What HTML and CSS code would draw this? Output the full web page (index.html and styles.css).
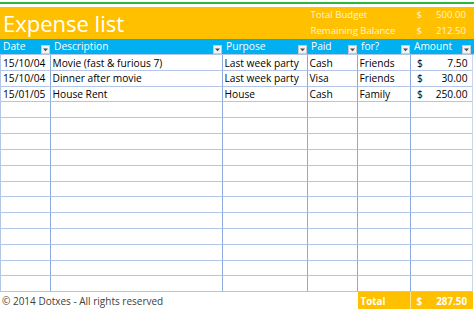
FILE: index.html
```html
<!DOCTYPE html>
<html>
<head>
<meta charset="utf-8">
<link rel="stylesheet" href="styles.css">
</head>
<body>
<div class="sheet">
  <div class="green"></div>
  <div class="banner">
    <h1 class="title">Expense list</h1>
    <div class="blabel">Total Budget</div>
    <div class="bmoney"><span>$</span><span>500.00</span></div>
    <div class="blabel">Remaining Balance</div>
    <div class="bmoney"><span>$</span><span>212.50</span></div>
  </div>

  <div class="head">
    <div class="h">Date<span class="dd"><svg viewBox="0 0 7 7" width="7" height="7"><polygon points="1,2.5 6,2.5 3.5,5.2" fill="#4a4a4a"/></svg></span></div>
    <div class="h">Description<span class="dd"><svg viewBox="0 0 7 7" width="7" height="7"><polygon points="1,2.5 6,2.5 3.5,5.2" fill="#4a4a4a"/></svg></span></div>
    <div class="h">Purpose<span class="dd"><svg viewBox="0 0 7 7" width="7" height="7"><polygon points="1,2.5 6,2.5 3.5,5.2" fill="#4a4a4a"/></svg></span></div>
    <div class="h">Paid<span class="dd"><svg viewBox="0 0 7 7" width="7" height="7"><polygon points="1,2.5 6,2.5 3.5,5.2" fill="#4a4a4a"/></svg></span></div>
    <div class="h">for?<span class="dd"><svg viewBox="0 0 7 7" width="7" height="7"><polygon points="1,2.5 6,2.5 3.5,5.2" fill="#4a4a4a"/></svg></span></div>
    <div class="h last">Amount<span class="dd"><svg viewBox="0 0 7 7" width="7" height="7"><polygon points="1,2.5 6,2.5 3.5,5.2" fill="#4a4a4a"/></svg></span></div>
  </div>

  <div class="body">
    <div class="c first">15/10/04</div><div class="c">Movie (fast &amp; furious 7)</div><div class="c">Last week party</div><div class="c">Cash</div><div class="c">Friends</div><div class="c amt"><span>$</span><span>7.50</span></div>
    <div class="c first">15/10/04</div><div class="c">Dinner after movie</div><div class="c">Last week party</div><div class="c">Visa</div><div class="c">Friends</div><div class="c amt"><span>$</span><span>30.00</span></div>
    <div class="c first">15/01/05</div><div class="c">House Rent</div><div class="c">House</div><div class="c">Cash</div><div class="c">Family</div><div class="c amt"><span>$</span><span>250.00</span></div>
    <div class="c first"></div><div class="c"></div><div class="c"></div><div class="c"></div><div class="c"></div><div class="c amt"></div>
    <div class="c first"></div><div class="c"></div><div class="c"></div><div class="c"></div><div class="c"></div><div class="c amt"></div>
    <div class="c first"></div><div class="c"></div><div class="c"></div><div class="c"></div><div class="c"></div><div class="c amt"></div>
    <div class="c first"></div><div class="c"></div><div class="c"></div><div class="c"></div><div class="c"></div><div class="c amt"></div>
    <div class="c first"></div><div class="c"></div><div class="c"></div><div class="c"></div><div class="c"></div><div class="c amt"></div>
    <div class="c first"></div><div class="c"></div><div class="c"></div><div class="c"></div><div class="c"></div><div class="c amt"></div>
    <div class="c first"></div><div class="c"></div><div class="c"></div><div class="c"></div><div class="c"></div><div class="c amt"></div>
    <div class="c first"></div><div class="c"></div><div class="c"></div><div class="c"></div><div class="c"></div><div class="c amt"></div>
    <div class="c first"></div><div class="c"></div><div class="c"></div><div class="c"></div><div class="c"></div><div class="c amt"></div>
    <div class="c first"></div><div class="c"></div><div class="c"></div><div class="c"></div><div class="c"></div><div class="c amt"></div>
    <div class="c first"></div><div class="c"></div><div class="c"></div><div class="c"></div><div class="c"></div><div class="c amt"></div>
    <div class="c first"></div><div class="c"></div><div class="c"></div><div class="c"></div><div class="c"></div><div class="c amt"></div>
  </div>

  <div class="foot">
    <div class="copy">© 2014 Dotxes - All rights reserved</div>
    <div class="tlabel">Total</div>
    <div class="tmoney"><span>$</span><span>287.50</span></div>
  </div>
</div>
</body>
</html>
```

FILE: styles.css
```css
* { box-sizing: border-box; }
html, body { margin: 0; padding: 0; background: #ffffff; }
body { font-family: "Open Sans", "Noto Sans", sans-serif; width: 474px; height: 316px; overflow: hidden; }

.sheet { width: 474px; }

.green { height: 2px; margin-top: 2px; margin-bottom: 3px; background: #2fb53a; }

.banner {
  display: grid;
  grid-template-columns: 308px 103px 63px;
  grid-template-rows: 16px 16px;
  background: #ffc000;
  height: 32px;
}
.title {
  grid-row: 1 / 3;
  grid-column: 1;
  margin: 0;
  padding: 1px 0 0 3px;
  font-size: 22px;
  line-height: 31px;
  font-weight: 400;
  color: #ffffff;
}
.blabel {
  font-size: 9.6px;
  font-weight: 500;
  line-height: 16px;
  color: #fff3d0;
  padding-left: 2.5px;
}
.bmoney {
  display: flex;
  justify-content: space-between;
  font-size: 9.6px;
  font-weight: 500;
  line-height: 16px;
  color: #fff3d0;
  padding: 0 8px 0 5.5px;
}

.head {
  display: grid;
  grid-template-columns: 51px 172px 85px 50px 53px 63px;
  height: 16px;
  background: #00b0f0;
  border-bottom: 1px solid #b4c6e7;
}
.h {
  display: flex;
  justify-content: space-between;
  align-items: flex-end;
  font-size: 10.2px;
  font-weight: 500;
  line-height: 15px;
  color: #ffffff;
  padding: 0 1.5px 1px 3px;
}
.h.last { padding-right: 3.5px; }
.dd {
  display: flex;
  align-items: center;
  justify-content: center;
  width: 9px;
  height: 9px;
  background: #f3f3f3;
  border: 1px solid #c9c9c9;
}
.dd svg { display: block; }

.body {
  display: grid;
  grid-template-columns: 51px 172px 85px 50px 53px 62px;
  grid-auto-rows: 15.82px;
  width: 473px;
}
.c {
  font-size: 10.2px;
  font-weight: 500;
  line-height: 15px;
  color: #000000;
  padding: 0.5px 0 0 1.5px;
  border-right: 1px solid #8ea9db;
  border-bottom: 1px solid #b4c6e7;
  white-space: nowrap;
  overflow: hidden;
}
.c.first { border-left: 1px solid #b4c6e7; padding-left: 2px; }
.c.amt {
  display: flex;
  justify-content: space-between;
  padding: 0.5px 4.5px 0 6px;
  border-right: 1px solid #ccd5e6;
}

.foot {
  display: grid;
  grid-template-columns: 358px 53px 62px;
  height: 16px;
}
.copy {
  font-size: 10px;
  font-weight: 500;
  line-height: 15px;
  padding: 1.5px 0 0 2px;
  color: #404040;
  white-space: nowrap;
}
.tlabel {
  background: #ffc000;
  color: #ffffff;
  font-weight: 700;
  font-size: 9.8px;
  line-height: 15px;
  padding: 1.5px 0 0 2.5px;
  border-right: 1px solid #ffe28a;
}
.tmoney {
  display: flex;
  justify-content: space-between;
  background: #ffc000;
  color: #ffffff;
  font-weight: 700;
  font-size: 9.8px;
  line-height: 15px;
  padding: 1.5px 6px 0 5.5px;
}
```
